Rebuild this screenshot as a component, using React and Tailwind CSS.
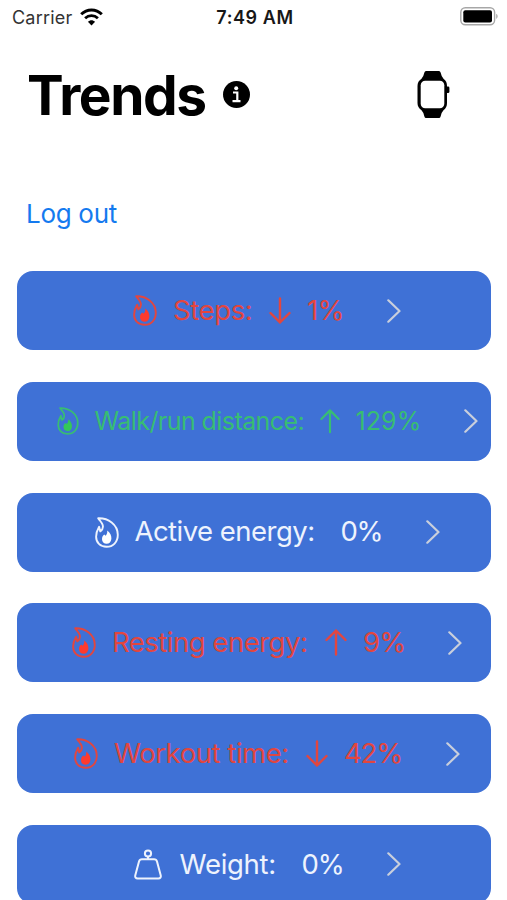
const trends = [
  { name: "Steps:", change: "1%", direction: "down", icon: "flame", color: "text-[#e2463f]", fill: "text-[#ff3a2d]", size: "text-[27.5px]", label: "w-[80px] tracking-[-0.4px]", value: "w-[36px] tracking-[-0.7px]" },
  { name: "Walk/run distance:", change: "129%", direction: "up", icon: "flame", color: "text-[#38bd72]", fill: "text-[#34c759]", size: "text-[25px]", label: "w-[209px] tracking-[-0.57px]", value: "w-[64px] tracking-[0.1px]" },
  { name: "Active energy:", change: "0%", direction: null, icon: "flame", color: "text-[#eef3fd]", fill: "text-white", size: "text-[27.5px]", label: "w-[179px] tracking-[-0.53px]", value: "w-[41px] tracking-[-1.4px]" },
  { name: "Resting energy:", change: "9%", direction: "up", icon: "flame", color: "text-[#e2463f]", fill: "text-[#ff3a2d]", size: "text-[27.5px]", label: "w-[197px] tracking-[-0.5px]", value: "w-[41px] tracking-[-0.7px]" },
  { name: "Workout time:", change: "42%", direction: "down", icon: "flame", color: "text-[#e2463f]", fill: "text-[#ff3a2d]", size: "text-[27.5px]", label: "w-[176px] tracking-[-0.45px]", value: "w-[58px] tracking-[-1.2px]" },
  { name: "Weight:", change: "0%", direction: null, icon: "weight", color: "text-[#eef3fd]", fill: "text-white", size: "text-[27.5px]", label: "w-[95px] ml-[18px] tracking-[-0.3px]", value: "w-[41px] tracking-[-1px]" },
];

function FlameIcon({ small, fill }) {
  return (
    <svg viewBox="0 0 24 31" fill="none" className={small ? "w-[22px] h-[28px] shrink-0" : "w-6 h-[31px] shrink-0"}>
      <path
        d="M3.2 1.2C13 .8 22.8 7.4 22.8 17.8C22.8 25.2 18 29.8 11.6 29.8C5.2 29.8 1.1 25.5 1.1 19.7C1.1 15.8 2.3 12.8 4.1 9.7L5.3 14.4C7.6 12.8 8.4 10.4 7.6 7.7C6.7 5.2 4.8 3.7 3.2 1.2Z"
        stroke="currentColor"
        strokeWidth="1.9"
        strokeLinejoin="round"
      />
      <path
        d="M12.2 13.6C15.2 15.8 16.6 18.8 16.4 21.8C16.2 24.8 14.3 26.8 11.6 26.8C8.9 26.8 7 24.9 7 22.2C7 20.2 7.7 18.8 9.2 17.6L10.7 18.7C12 17.3 12.5 15.7 12.2 13.6Z"
        fill="currentColor"
        className={fill}
      />
    </svg>
  );
}

function WeightIcon() {
  return (
    <svg viewBox="0 0 28 31" fill="none" stroke="currentColor" strokeWidth="2" strokeLinejoin="round" className="w-7 h-[31px] shrink-0">
      <circle cx="14" cy="4.5" r="3.1" />
      <path d="M14 7.6V10.2M8 10.2H20C21.6 10.2 22.6 10.9 23 12.4L26.7 26.3C27.2 28.3 26.2 29.5 24.4 29.5H3.6C1.8 29.5 .8 28.3 1.3 26.3L5 12.4C5.4 10.9 6.4 10.2 8 10.2Z" />
    </svg>
  );
}

function Arrow({ direction, small }) {
  return (
    <svg
      viewBox="0 0 22 27"
      fill="none"
      stroke="currentColor"
      strokeWidth="2.4"
      strokeLinecap="round"
      strokeLinejoin="round"
      className={small ? "w-5 h-[24.5px] shrink-0" : "w-[22px] h-[27px] shrink-0"}
    >
      {direction === "up" ? <path d="M11 25.5V1.5M1.5 11L11 1.5L20.5 11" /> : <path d="M11 1.5V25.5M1.5 16L11 25.5L20.5 16" />}
    </svg>
  );
}

function TrendButton({ trend }) {
  const small = trend.size === "text-[25px]";

  return (
    <button className={`flex h-[79px] w-full shrink-0 items-center justify-center rounded-[16px] bg-[#3f71d6] pl-[26px] ${trend.color}`}>
      {trend.icon === "flame" ? <FlameIcon small={small} fill={trend.fill} /> : <WeightIcon />}
      <span className={`ml-4 shrink-0 whitespace-nowrap text-left ${trend.size} ${trend.label}`}>{trend.name}</span>
      <span className={trend.direction ? "mx-4 shrink-0" : "w-[27px] shrink-0"}>
        {trend.direction && <Arrow direction={trend.direction} small={small} />}
      </span>
      <span className={`shrink-0 whitespace-nowrap text-left ${trend.size} ${trend.value}`}>{trend.change}</span>
      <svg viewBox="0 0 14 24" fill="none" className="ml-11 h-6 w-3.5 shrink-0 text-[#c9cfdc]">
        <path d="M1.3 1.3L12.5 12L1.3 22.7" stroke="currentColor" strokeWidth="2.2" strokeLinecap="round" strokeLinejoin="round" />
      </svg>
    </button>
  );
}

function StatusBar() {
  return (
    <div className="grid h-[33px] shrink-0 grid-cols-3 items-center pl-3 pr-[9px] text-[18px] leading-none text-[#171717]">
      <div className="flex items-center gap-2">
        <span className="pt-[3px] tracking-[0.2px] text-[#333]">Carrier</span>
        <svg viewBox="0 0 23 18" className="h-[18px] w-[23px] text-black" fill="none" stroke="currentColor">
          <path d="M1.2 6.2C7 .5 16 .5 21.8 6.2" strokeWidth="3" />
          <path d="M5.1 10.2C8.8 6.7 14.2 6.7 17.9 10.2" strokeWidth="2.8" />
          <path d="M7.9 13.8C10 11.7 13 11.7 15.1 13.8L11.5 17.5Z" fill="currentColor" stroke="none" />
        </svg>
      </div>
      <span className="pt-[3px] text-center font-semibold whitespace-nowrap tracking-[0.6px]">7:49 AM</span>
      <svg viewBox="0 0 38 19" className="h-[19px] w-[38px] justify-self-end">
        <rect x=".8" y=".8" width="33.8" height="17" rx="4.5" fill="none" stroke="#a7a7a7" strokeWidth="1.4" />
        <rect x="3.3" y="3.2" width="28.7" height="12.2" rx="2" fill="#000" />
        <path d="M36.3 6.7C38 7.8 38 10.8 36.3 11.9Z" fill="#999" />
      </svg>
    </div>
  );
}

function App() {
  return (
    <div className="flex h-[900px] w-full flex-col overflow-hidden bg-white font-['Inter',sans-serif]">
      <StatusBar />
      <header className="mt-7 flex h-[67px] shrink-0 items-center pl-[27px] pr-[57px]">
        <h1 className="pt-px text-[55px] font-bold leading-none tracking-[-1.4px] text-black">Trends</h1>
        <svg viewBox="0 0 27 27" className="ml-[17px] h-[27px] w-[27px]">
          <circle cx="13.5" cy="13.5" r="13.5" fill="#000" />
          <circle cx="13.2" cy="7.3" r="2" fill="#fff" />
          <path d="M10 11.5H14.3V20M9.5 20.2H17.5" stroke="#fff" strokeWidth="2.2" fill="none" />
        </svg>
        <svg viewBox="0 0 33 47" className="ml-auto h-[47px] w-[33px]">
          <path d="M9 0H22Q23.2 0 23.6 1.5Q24.6 6 26.5 7.8C29 9.5 30 12 30 15V32C30 35 29 37.5 26.5 39.2Q24.6 41 23.6 45.5Q23.2 47 22 47H9Q7.8 47 7.4 45.5Q6.4 41 4.5 39.2C1.8 37.5 .5 35 .5 32V15C.5 12 1.8 9.5 4.5 7.8Q6.4 6 7.4 1.5Q7.8 0 9 0Z" fill="#000" />
          <rect x="3.7" y="9.8" width="23.6" height="27.5" rx="4.5" fill="#fff" />
          <rect x="29" y="15.5" width="3.4" height="6.5" rx="1.3" fill="#000" />
        </svg>
      </header>
      <button className="ml-[26px] mt-[69px] h-[34px] shrink-0 self-start text-[26px] leading-[34px] tracking-[-0.3px] text-[#147aef]">Log out</button>
      <main className="mt-10 flex shrink-0 flex-col gap-[31.8px] pl-[17px] pr-4">
        {trends.map((trend) => (
          <TrendButton key={trend.name} trend={trend} />
        ))}
      </main>
    </div>
  );
}

export default App;
